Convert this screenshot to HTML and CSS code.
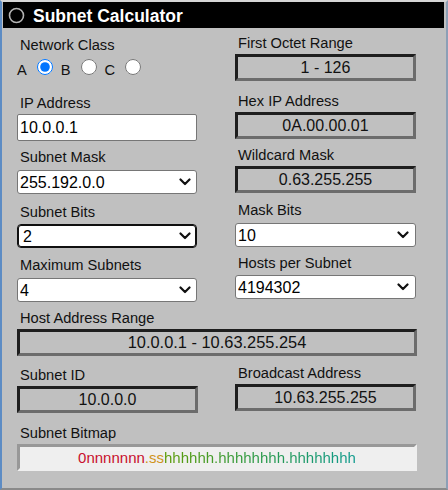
FILE: index.html
```html
<!DOCTYPE html>
<html>
<head>
<meta charset="utf-8">
<title>Subnet Calculator</title>
<link rel="stylesheet" href="styles.css">
</head>
<body>
<div class="window">
  <div class="titlebar">
    <svg class="title-icon" width="17" height="17" viewBox="0 0 17 17"><circle cx="8.5" cy="8.5" r="7" fill="none" stroke="#b4b4b4" stroke-width="1.6"/></svg>
    <span class="title-text">Subnet Calculator</span>
  </div>
  <div class="form">
    <div class="cell l">
      <div class="label">Network Class</div>
      <div class="radios"><span class="rl">A</span><input class="radio" type="radio" name="cls" checked><span class="rl">B</span><input class="radio" type="radio" name="cls"><span class="rl">C</span><input class="radio" type="radio" name="cls"></div>
    </div>
    <div class="cell">
      <div class="label">First Octet Range</div>
      <div class="out">1 - 126</div>
    </div>

    <div class="cell l">
      <div class="label">IP Address</div>
      <input class="field text" type="text" value="10.0.0.1">
    </div>
    <div class="cell">
      <div class="label">Hex IP Address</div>
      <div class="out">0A.00.00.01</div>
    </div>

    <div class="cell l">
      <div class="label">Subnet Mask</div>
      <div class="selwrap"><select class="field sel"><option>255.192.0.0</option></select><svg class="chev" width="12" height="8" viewBox="0 0 12 8"><path d="M1.5 1.5 L6 6 L10.5 1.5" fill="none" stroke="#111" stroke-width="2.2" stroke-linecap="round" stroke-linejoin="round"/></svg></div>
    </div>
    <div class="cell">
      <div class="label">Wildcard Mask</div>
      <div class="out">0.63.255.255</div>
    </div>

    <div class="cell l">
      <div class="label">Subnet Bits</div>
      <div class="selwrap tight"><select class="field sel focused"><option>2</option></select><svg class="chev" width="12" height="8" viewBox="0 0 12 8"><path d="M1.5 1.5 L6 6 L10.5 1.5" fill="none" stroke="#111" stroke-width="2.2" stroke-linecap="round" stroke-linejoin="round"/></svg></div>
    </div>
    <div class="cell">
      <div class="label">Mask Bits</div>
      <div class="selwrap"><select class="field sel"><option>10</option></select><svg class="chev" width="12" height="8" viewBox="0 0 12 8"><path d="M1.5 1.5 L6 6 L10.5 1.5" fill="none" stroke="#111" stroke-width="2.2" stroke-linecap="round" stroke-linejoin="round"/></svg></div>
    </div>

    <div class="cell l">
      <div class="label">Maximum Subnets</div>
      <div class="selwrap"><select class="field sel"><option>4</option></select><svg class="chev" width="12" height="8" viewBox="0 0 12 8"><path d="M1.5 1.5 L6 6 L10.5 1.5" fill="none" stroke="#111" stroke-width="2.2" stroke-linecap="round" stroke-linejoin="round"/></svg></div>
    </div>
    <div class="cell">
      <div class="label">Hosts per Subnet</div>
      <div class="selwrap tight"><select class="field sel"><option>4194302</option></select><svg class="chev" width="12" height="8" viewBox="0 0 12 8"><path d="M1.5 1.5 L6 6 L10.5 1.5" fill="none" stroke="#111" stroke-width="2.2" stroke-linecap="round" stroke-linejoin="round"/></svg></div>
    </div>

    <div class="cell span">
      <div class="label">Host Address Range</div>
      <div class="out wide">10.0.0.1 - 10.63.255.254</div>
    </div>

    <div class="cell l">
      <div class="label">Subnet ID</div>
      <div class="out">10.0.0.0</div>
    </div>
    <div class="cell">
      <div class="label">Broadcast Address</div>
      <div class="out">10.63.255.255</div>
    </div>

    <div class="cell span">
      <div class="label">Subnet Bitmap</div>
      <div class="bitmap"><span class="b-net">0nnnnnnn</span><span class="b-sub">.ss</span><span class="b-host">hhhhhh.hhhhhhhh.hhhhhhhh</span></div>
    </div>
  </div>
</div>
</body>
</html>
```
FILE: styles.css
```css
html, body {
  margin: 0;
  padding: 0;
}
body {
  background: #c0c0c0;
  font-family: "Liberation Sans", Arial, sans-serif;
  color: #111;
}
.window {
  box-sizing: border-box;
  width: 448px;
  height: 490px;
  border-left: 2px solid #5d8cc4;
  border-right: 2px solid #8c9fb6;
  border-top: 2px solid #d6d6d6;
  border-bottom: 2px solid #8a8a8a;
  padding: 0 2px 0 1px;
  background: #c0c0c0;
}
.titlebar {
  height: 26px;
  background: #000;
  display: flex;
  align-items: center;
  padding-left: 5px;
}
.title-icon {
  display: block;
  flex: none;
}
.title-text {
  margin-left: 8px;
  color: #fff;
  font-weight: bold;
  font-size: 17.5px;
  line-height: 20px;
  padding-top: 1px;
}
.form {
  display: grid;
  grid-template-columns: 181px 181px;
  grid-template-rows: 58px 54px 55px 53px 55px 55px 60px auto;
  column-gap: 37px;
  padding: 7px 0 0 14px;
}
.cell {
  display: flex;
  flex-direction: column;
  align-items: stretch;
}
.cell.l {
  padding-top: 2px;
}
.cell.span {
  grid-column: 1 / span 2;
  width: 400px;
}
.label {
  font-size: 14.67px;
  line-height: 17px;
  height: 17px;
  padding-left: 3px;
  margin-bottom: 2px;
  white-space: nowrap;
}
.radios {
  font-size: 14.67px;
  line-height: 17px;
  margin-top: 3px;
}
.rl {
  vertical-align: baseline;
}
.radio {
  width: 16px;
  height: 16px;
  margin: 0 8px 0 10px;
  vertical-align: baseline;
}
.out {
  box-sizing: border-box;
  height: 27px;
  border-style: solid;
  border-width: 3px;
  border-color: #1e1e1e #6c6c6c #6c6c6c #1e1e1e;
  background: #c0c0c0;
  text-align: center;
  font-size: 16px;
  line-height: 21px;
  color: #111;
  white-space: nowrap;
}
.out.wide {
  font-size: 16.4px;
}
.field {
  box-sizing: border-box;
  font-family: "Liberation Sans", Arial, sans-serif;
  font-size: 16px;
  color: #000;
  margin: 0;
  width: 180px;
}
.text {
  height: 27px;
  border: 1px solid #767676;
  border-radius: 2px;
  padding: 1px 2px;
  background: #fff;
}
.selwrap {
  position: relative;
  margin-top: 2px;
}
.selwrap.tight {
  margin-top: 1px;
}
.sel {
  display: block;
  -webkit-appearance: none;
  appearance: none;
  height: 24px;
  border: 1px solid #767676;
  border-radius: 3px;
  background-color: #fff;
  padding: 0 0 0 2px;
  outline: none;
}
.chev {
  position: absolute;
  right: 7px;
  top: 8px;
  pointer-events: none;
}
.cell:not(.l) .field {
  width: 181px;
}
.sel.focused {
  border-color: #101010;
  box-shadow: inset 0 0 0 1px #101010;
  border-radius: 4px;
  padding-left: 5px;
}
.bitmap {
  box-sizing: border-box;
  height: 27px;
  border-style: solid;
  border-width: 3px;
  border-color: #989898 #efefef #efefef #989898;
  background: #efefef;
  text-align: center;
  font-size: 15px;
  line-height: 21px;
  white-space: nowrap;
}
.b-net {
  color: #c8102e;
}
.b-sub {
  color: #d0941c;
}
.b-host {
  background: linear-gradient(90deg, #5e9c08 0%, #2c9a4a 50%, #0e9a8e 100%);
  -webkit-background-clip: text;
  background-clip: text;
  color: transparent;
}
```
